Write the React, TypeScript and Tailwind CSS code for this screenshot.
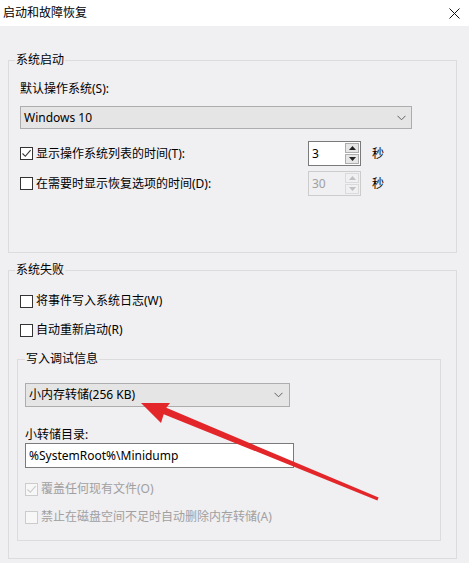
import React from "react";

const FONT = "font-['Noto_Sans','Noto_Sans_CJK_SC',sans-serif]";

function Check({ checked, disabled }: { checked?: boolean; disabled?: boolean }) {
  return (
    <span
      className={
        disabled
          ? "w-[13px] h-[13px] border border-[#cccccc] bg-[#f7f7f7] flex items-center justify-center shrink-0"
          : "w-[13px] h-[13px] border border-[#333333] bg-white flex items-center justify-center shrink-0"
      }
    >
      {checked && (
        <svg width="11" height="11" viewBox="0 0 11 11">
          <path
            d="M1.5 5.5 L4.3 8.3 L9.6 2.2"
            fill="none"
            stroke={disabled ? "#c8c8c8" : "#333333"}
            strokeWidth="1.1"
          />
        </svg>
      )}
    </span>
  );
}

function Chevron() {
  return (
    <svg width="9" height="6" viewBox="0 0 9 6">
      <path d="M0.5 0.8 L4.5 4.8 L8.5 0.8" fill="none" stroke="#606060" strokeWidth="1" />
    </svg>
  );
}

function Spinner({ value, disabled }: { value: string; disabled?: boolean }) {
  const arrowColor = disabled ? "#c0c0c0" : "#222222";
  return (
    <div className="flex h-[25px] w-[53px] shrink-0">
      <div
        className={
          disabled
            ? "w-[36px] bg-[#f0eff2] border border-[#cccccc] border-r-0 pl-[3px] flex items-center text-[#a0a0a0]"
            : "w-[36px] bg-white border border-[#7a7a7a] border-r-0 pl-[3px] flex items-center"
        }
      >
        {value}
      </div>
      <div
        className={
          disabled
            ? "w-[17px] border border-[#cccccc] border-l-0 bg-[#f0eff2] flex flex-col p-px gap-px"
            : "w-[17px] border border-[#7a7a7a] border-l-0 bg-white flex flex-col p-px gap-px"
        }
      >
        <div
          className={
            disabled
              ? "flex-1 bg-[#f0eff2] border border-[#dadada] flex items-center justify-center"
              : "flex-1 bg-[#e6e6e6] border border-[#adadad] flex items-center justify-center"
          }
        >
          <svg width="7" height="4" viewBox="0 0 7 4">
            <polygon points="0,4 7,4 3.5,0" fill={arrowColor} />
          </svg>
        </div>
        <div
          className={
            disabled
              ? "flex-1 bg-[#f0eff2] border border-[#dadada] flex items-center justify-center"
              : "flex-1 bg-[#e6e6e6] border border-[#adadad] flex items-center justify-center"
          }
        >
          <svg width="7" height="4" viewBox="0 0 7 4">
            <polygon points="0,0 7,0 3.5,4" fill={arrowColor} />
          </svg>
        </div>
      </div>
    </div>
  );
}

export default function App() {
  return (
    <div className={`relative w-[469px] h-[563px] bg-[#f0eff2] text-[12px] leading-4 text-black ${FONT}`}>
      {/* Title bar */}
      <div className="h-[26px] bg-white flex items-center justify-between pl-[3px] pr-[9px]">
        <span>启动和故障恢复</span>
        <svg width="11" height="11" viewBox="0 0 11 11">
          <path d="M0.5 0.5 L10.5 10.5 M10.5 0.5 L0.5 10.5" stroke="#111111" strokeWidth="1" />
        </svg>
      </div>

      <div className="pl-[8px] pr-[12px]">
        {/* 系统启动 */}
        <div className="relative mt-[34px] h-[193px] border border-[#dcdcdc] pl-[11px] pt-[20px]">
          <span className="absolute -top-[9px] left-[6px] px-px bg-[#f0eff2]">系统启动</span>
          <div>默认操作系统(S):</div>
          <div className="mt-[9px] h-[23px] w-[392px] bg-[#e5e5e5] border border-[#adadad] flex items-center justify-between pl-[3px] pr-[5px]">
            <span>Windows 10</span>
            <Chevron />
          </div>
          <div className="mt-[12px] flex items-center h-[25px]">
            <div className="w-[288px] flex items-center gap-[3px]">
              <Check checked />
              <span>显示操作系统列表的时间(T):</span>
            </div>
            <Spinner value="3" />
            <span className="ml-[11px]">秒</span>
          </div>
          <div className="mt-[5px] flex items-center h-[25px]">
            <div className="w-[288px] flex items-center gap-[3px]">
              <Check />
              <span>在需要时显示恢复选项的时间(D):</span>
            </div>
            <Spinner value="30" disabled />
            <span className="ml-[11px]">秒</span>
          </div>
        </div>

        {/* 系统失败 */}
        <div className="relative mt-[17px] h-[289px] border border-[#dcdcdc] pl-[8px] pt-[22px]">
          <span className="absolute -top-[9px] left-[6px] px-px bg-[#f0eff2]">系统失败</span>
          <div className="ml-[3px] flex items-center gap-[3px] h-4">
            <Check />
            <span>将事件写入系统日志(W)</span>
          </div>
          <div className="ml-[3px] mt-[13px] flex items-center gap-[3px] h-4">
            <Check />
            <span>自动重新启动(R)</span>
          </div>

          {/* 写入调试信息 */}
          <div className="relative mt-[21px] w-[424px] border border-[#dcdcdc] pl-[7px] pt-[23px] pb-[15px]">
            <span className="absolute -top-[9px] left-[7px] px-px bg-[#f0eff2]">写入调试信息</span>
            <div className="h-[24px] w-[265px] bg-[#e5e5e5] border border-[#adadad] flex items-center justify-between pl-[3px] pr-[6px]">
              <span>小内存转储(256 KB)</span>
              <Chevron />
            </div>
            <div className="mt-[20px]">小转储目录:</div>
            <div className="h-[25px] w-[269px] bg-white border border-[#7a7a7a] flex items-center pl-[3px]">
              %SystemRoot%\Minidump
            </div>
            <div className="mt-[13px] flex items-center gap-[3px] h-4 text-[#a0a0a0]">
              <Check checked disabled />
              <span>覆盖任何现有文件(O)</span>
            </div>
            <div className="mt-[12px] flex items-center gap-[3px] h-4 text-[#a0a0a0]">
              <Check disabled />
              <span>禁止在磁盘空间不足时自动删除内存转储(A)</span>
            </div>
          </div>
        </div>
      </div>

      {/* Red annotation arrow */}
      <svg className="absolute inset-0 pointer-events-none" width="469" height="563" viewBox="0 0 469 563">
        <polygon
          points="141,403 170,403 166.3,407.8 378.6,497.6 377.4,500.4 163.7,414.2 161,423"
          fill="#e3262a"
        />
      </svg>
    </div>
  );
}
